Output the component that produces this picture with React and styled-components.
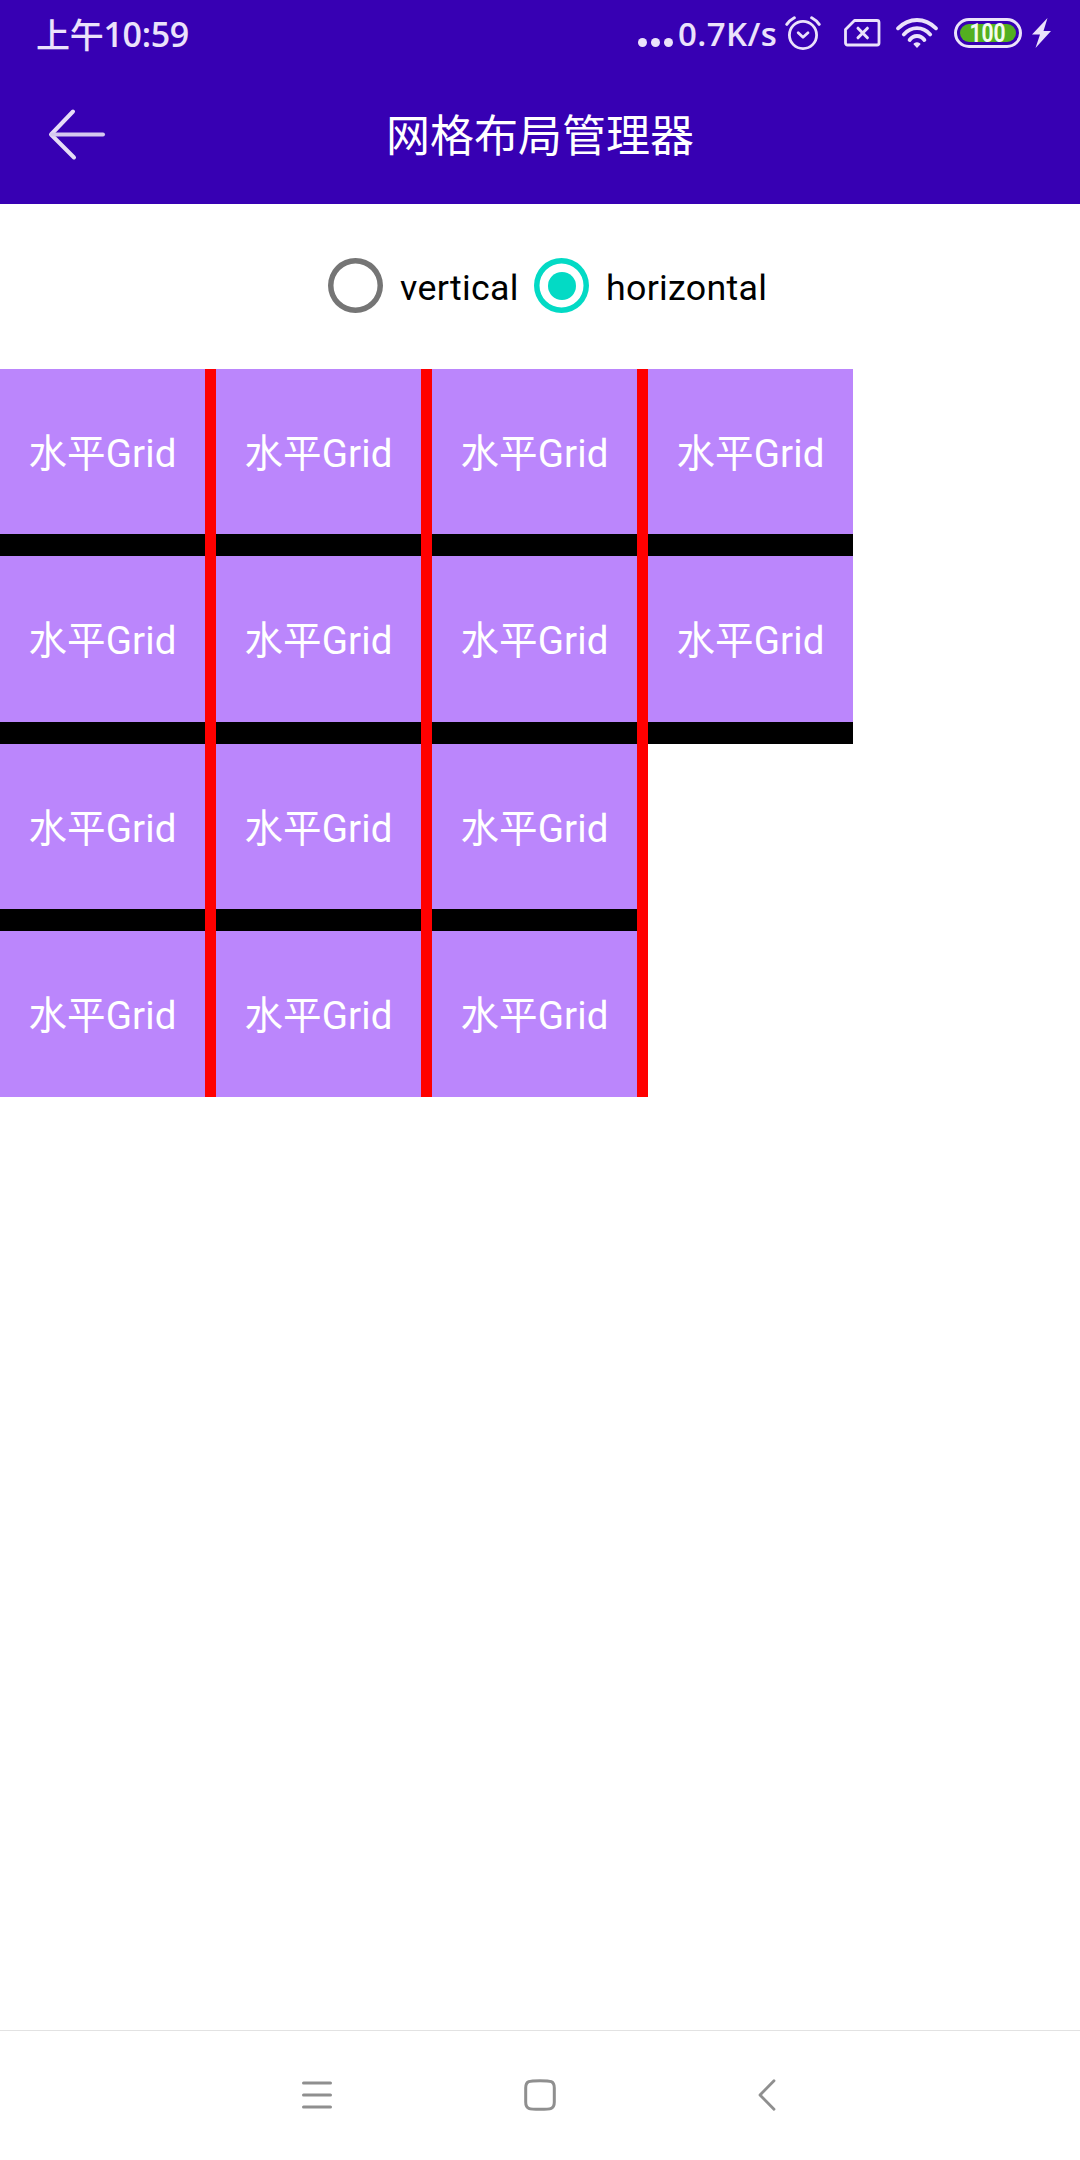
import React from 'react';
import styled, { createGlobalStyle } from 'styled-components';

const Global = createGlobalStyle`
  *, *::before, *::after { box-sizing: border-box; }
  body { margin: 0; background: #fff; }
`;

const Screen = styled.div`
  width: 1080px;
  height: 2160px;
  display: flex;
  flex-direction: column;
  background: #fff;
  font-family: Roboto, 'Noto Sans CJK SC', sans-serif;
  overflow: hidden;
`;

const Header = styled.header`
  height: 204px;
  flex: none;
  background: #3700b3;
`;

const StatusBar = styled.div`
  height: 66px;
  padding: 0 29px 0 36px;
  display: flex;
  align-items: center;
  justify-content: space-between;
  color: #ebe2fb;
  font-family: 'Open Sans', 'Noto Sans CJK SC', sans-serif;
  font-weight: 600;
  line-height: 66px;
  white-space: nowrap;
`;

const Clock = styled.div`
  display: flex;
  padding-top: 1px;
  font-size: 34px;
  letter-spacing: -0.3px;
`;

const Meridiem = styled.span`
  font-family: 'Noto Sans CJK SC', sans-serif;
  font-weight: 500;
`;

const StatusIcons = styled.div`
  display: flex;
  align-items: center;
`;

const Dots = styled.div`
  display: flex;
  gap: 4px;
  padding-top: 18px;
  margin-right: 5px;
`;

const Dot = styled.i`
  width: 9px;
  height: 9px;
  border-radius: 50%;
  background: currentColor;
`;

const Speed = styled.span`
  width: 107px;
  padding-top: 1px;
  font-size: 33px;
  letter-spacing: 0.4px;
`;

const Icon = styled.svg`
  display: block;
  flex: none;
  margin-right: ${(p) => p.$gap || 0}px;
  fill: none;
  stroke: currentColor;
  stroke-linecap: round;
  stroke-linejoin: round;
`;

const Battery = styled.div`
  width: 68px;
  height: 30px;
  margin-right: 10px;
  padding: 3px;
  border: 3px solid currentColor;
  border-radius: 15px;
  display: flex;
`;

const Charge = styled.div`
  flex: 1;
  display: flex;
  align-items: center;
  justify-content: center;
  border-radius: 9px;
  background: #53b020;
  color: #f3fbef;
  font: 700 25px/18px Roboto, sans-serif;
`;

const ChargeLevel = styled.span`
  padding-top: 1px;
  transform: scaleX(0.84);
`;

const TitleBar = styled.div`
  height: 138px;
  padding: 0 46px;
  display: grid;
  grid-template-columns: 62px 1fr 62px;
  align-items: center;
  color: #fff;
`;

const Title = styled.h1`
  margin: 0;
  padding-top: 4px;
  text-align: center;
  font-size: 44px;
  font-weight: 400;
  line-height: 64px;
`;

const RadioGroup = styled.div`
  height: 165px;
  flex: none;
  padding: 0 0 2px 328px;
  display: flex;
  align-items: center;
`;

const RadioOption = styled.label`
  display: flex;
  align-items: center;
  width: ${(p) => p.$width}px;
  color: #000;
  font-size: 35.75px;
  letter-spacing: 0.3px;
  line-height: 48px;
`;

const RadioRing = styled.span`
  width: 55px;
  height: 55px;
  margin-right: 17px;
  flex: none;
  display: flex;
  align-items: center;
  justify-content: center;
  border-radius: 50%;
  box-shadow: inset 0 0 0 5.5px ${(p) => (p.$checked ? '#03dac5' : '#757575')};
`;

const RadioDot = styled.span`
  width: 28px;
  height: 28px;
  border-radius: 50%;
  background: #03dac5;
`;

const RadioText = styled.span`
  padding-top: 4px;
`;

const Columns = styled.main`
  flex: 1;
  display: flex;
  align-items: flex-start;
`;

const Column = styled.div`
  width: ${(p) => (p.$divided ? 216 : 205)}px;
  border-right: ${(p) => (p.$divided ? '11px solid #f00' : 'none')};
`;

const Cell = styled.div`
  height: ${(p) => p.$height + (p.$divided ? 22 : 0)}px;
  padding-top: ${(p) => p.$height - 162 + (p.$height === 165 ? 1 : -1)}px;
  border-bottom: ${(p) => (p.$divided ? '22px solid #000' : 'none')};
  background: #bb86fc;
  color: #fff;
  display: flex;
  align-items: center;
  justify-content: center;
  font-size: 38.5px;
  letter-spacing: 0.1px;
  line-height: 56px;
  white-space: nowrap;
`;

const NavBar = styled.nav`
  height: 130px;
  flex: none;
  padding: 0 0 2px 8px;
  border-top: 1px solid #e2e2e2;
  display: flex;
  justify-content: center;
  align-items: center;
  color: #8f8f8f;
`;

const NavButton = styled.div`
  width: ${(p) => p.$width}px;
  display: flex;
  justify-content: center;
`;

const rowHeights = [165, 166, 165, 166];
const columnCounts = [4, 4, 4, 2];

function Radio({ label, checked, width }) {
  return (
    <RadioOption $width={width}>
      <RadioRing $checked={checked}>{checked && <RadioDot />}</RadioRing>
      <RadioText>{label}</RadioText>
    </RadioOption>
  );
}

export default function App() {
  return (
    <>
      <Global />
      <Screen>
        <Header>
          <StatusBar>
            <Clock><Meridiem>上午</Meridiem>10:59</Clock>
            <StatusIcons>
              <Dots><Dot /><Dot /><Dot /></Dots>
              <Speed>0.7K/s</Speed>
              <Icon width="36" height="36" viewBox="0 0 36 36" strokeWidth="2.8" $gap={23}>
                <circle cx="18" cy="20" r="13.6" />
                <path d="M13.2 17.8l4.8 4.4 5-4.4" />
                <path d="M1.8 9.4q3-4.2 7.5-6.6M34.2 9.4q-3-4.2-7.5-6.6" strokeWidth="3" />
              </Icon>
              <Icon width="38" height="30" viewBox="0 0 38 30" strokeWidth="2.8" $gap={13}>
                <path d="M10.5 2.5H33a2 2 0 0 1 2 2V25a2 2 0 0 1-2 2H3.5a2 2 0 0 1-2-2V11.5z" />
                <path d="M14 10.2l9.4 9.6M23.4 10.2l-9.4 9.6" strokeWidth="3" />
              </Icon>
              <Icon width="44" height="32" viewBox="0 0 44 32" strokeWidth="3.8" $gap={15}>
                <path d="M3 11.3Q11.5 3 22 3t19 8.3" />
                <path d="M8.8 17.4Q14.4 11.2 22 11.2t13.2 6.2" />
                <path d="M14.6 23Q17.6 19 22 19t7.4 4" />
                <path d="M22 25.2c2 0 3.5 1 3.5 2L22 31l-3.5-3.8c0-1 1.5-2 3.5-2z" fill="currentColor" stroke="none" />
              </Icon>
              <Battery><Charge><ChargeLevel>100</ChargeLevel></Charge></Battery>
              <Icon width="19" height="30" viewBox="0 0 19 30">
                <path d="M15.5 0L0 16.5h8L3.5 30 19 13h-7.5z" fill="currentColor" stroke="none" />
              </Icon>
            </StatusIcons>
          </StatusBar>
          <TitleBar>
            <Icon width="62" height="54" viewBox="0 0 62 54" strokeWidth="4">
              <path d="M27 3.5L5 26.5l23 23" stroke="#e6dcf7" />
              <path d="M6 26.5h51" stroke="#d5c8f0" />
            </Icon>
            <Title>网格布局管理器</Title>
          </TitleBar>
        </Header>
        <RadioGroup>
          <Radio label="vertical" width={206} />
          <Radio label="horizontal" width={236} checked />
        </RadioGroup>
        <Columns>
          {columnCounts.map((count, c) => (
            <Column key={c} $divided={c < 3}>
              {rowHeights.slice(0, count).map((h, r) => (
                <Cell key={r} $height={h} $divided={r < 3}>水平Grid</Cell>
              ))}
            </Column>
          ))}
        </Columns>
        <NavBar>
          <NavButton $width={219}>
            <Icon width="32" height="30" viewBox="0 0 32 30" strokeWidth="3">
              <path d="M2.5 3h27M2.5 15h27M2.5 27h27" />
            </Icon>
          </NavButton>
          <NavButton $width={227}>
            <Icon width="32" height="32" viewBox="0 0 32 32" strokeWidth="3">
              <path d="M16 1.7C27 1.7 30.3 2 30.3 9v14c0 7-3.3 7.3-14.3 7.3S1.7 30 1.7 23V9C1.7 2 5 1.7 16 1.7z" />
            </Icon>
          </NavButton>
          <NavButton $width={227}>
            <Icon width="18" height="32" viewBox="0 0 18 32" strokeWidth="2.8">
              <path d="M16 1.7L2 16l14 14.3" />
            </Icon>
          </NavButton>
        </NavBar>
      </Screen>
    </>
  );
}
